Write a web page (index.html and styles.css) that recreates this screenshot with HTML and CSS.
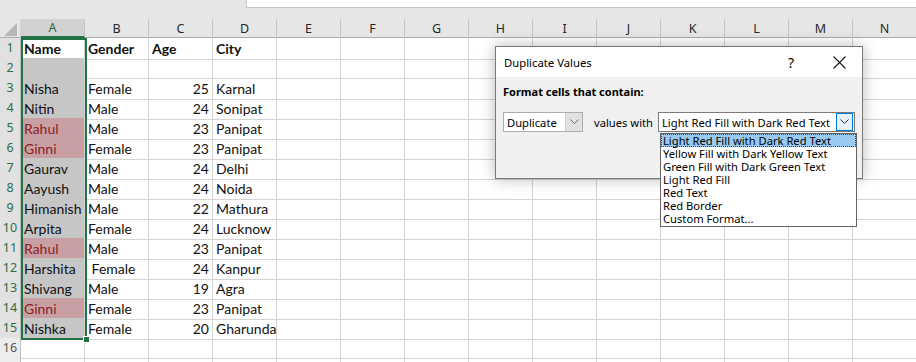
FILE: index.html
```html
<!DOCTYPE html>
<html lang="en">
<head>
    <meta charset="UTF-8">
    <title>Duplicate Values</title>
    <link rel="stylesheet" href="styles.css">
</head>
<body>
    <!-- Formula bar strip -->
    <div class="topbar"><div class="formula-box"></div></div>

    <!-- Sheet -->
    <div class="sheet">
        <div class="row head">
            <div class="corner"><span class="tri"></span></div>
            <div class="col sel">A</div><div class="col">B</div><div class="col">C</div><div class="col">D</div>
            <div class="col">E</div><div class="col">F</div><div class="col">G</div><div class="col">H</div>
            <div class="col">I</div><div class="col">J</div><div class="col">K</div><div class="col">L</div>
            <div class="col">M</div><div class="col">N</div>
        </div>
        <div class="row bold"><div class="num on">1</div><div class="cell a active">Name</div><div class="cell">Gender</div><div class="cell">Age</div><div class="cell">City</div><div class="rest"></div></div>
        <div class="row"><div class="num on">2</div><div class="cell a"></div><div class="cell"></div><div class="cell"></div><div class="cell"></div><div class="rest"></div></div>
        <div class="row"><div class="num on">3</div><div class="cell a">Nisha</div><div class="cell">Female</div><div class="cell n">25</div><div class="cell">Karnal</div><div class="rest"></div></div>
        <div class="row"><div class="num on">4</div><div class="cell a">Nitin</div><div class="cell">Male</div><div class="cell n">24</div><div class="cell">Sonipat</div><div class="rest"></div></div>
        <div class="row"><div class="num on">5</div><div class="cell a dup">Rahul</div><div class="cell">Male</div><div class="cell n">23</div><div class="cell">Panipat</div><div class="rest"></div></div>
        <div class="row"><div class="num on">6</div><div class="cell a dup">Ginni</div><div class="cell">Female</div><div class="cell n">23</div><div class="cell">Panipat</div><div class="rest"></div></div>
        <div class="row"><div class="num on">7</div><div class="cell a">Gaurav</div><div class="cell">Male</div><div class="cell n">24</div><div class="cell">Delhi</div><div class="rest"></div></div>
        <div class="row"><div class="num on">8</div><div class="cell a">Aayush</div><div class="cell">Male</div><div class="cell n">24</div><div class="cell">Noida</div><div class="rest"></div></div>
        <div class="row"><div class="num on">9</div><div class="cell a">Himanish</div><div class="cell">Male</div><div class="cell n">22</div><div class="cell">Mathura</div><div class="rest"></div></div>
        <div class="row"><div class="num on">10</div><div class="cell a">Arpita</div><div class="cell">Female</div><div class="cell n">24</div><div class="cell">Lucknow</div><div class="rest"></div></div>
        <div class="row"><div class="num on">11</div><div class="cell a dup">Rahul</div><div class="cell">Male</div><div class="cell n">23</div><div class="cell">Panipat</div><div class="rest"></div></div>
        <div class="row"><div class="num on">12</div><div class="cell a">Harshita</div><div class="cell">&nbsp;Female</div><div class="cell n">24</div><div class="cell">Kanpur</div><div class="rest"></div></div>
        <div class="row"><div class="num on">13</div><div class="cell a">Shivang</div><div class="cell">Male</div><div class="cell n">19</div><div class="cell">Agra</div><div class="rest"></div></div>
        <div class="row"><div class="num on">14</div><div class="cell a dup">Ginni</div><div class="cell">Female</div><div class="cell n">23</div><div class="cell">Panipat</div><div class="rest"></div></div>
        <div class="row"><div class="num on">15</div><div class="cell a">Nishka</div><div class="cell">Female</div><div class="cell n">20</div><div class="cell">Gharunda</div><div class="rest"></div></div>
        <div class="row"><div class="num">16</div><div class="cell"></div><div class="cell"></div><div class="cell"></div><div class="cell"></div><div class="rest"></div></div>
        <div class="row"><div class="num"></div><div class="cell"></div><div class="cell"></div><div class="cell"></div><div class="cell"></div><div class="rest"></div></div>

        <!-- Selection outline over A1:A15 -->
        <div class="selection"><span class="handle"></span></div>
    </div>

    <!-- Duplicate Values dialog -->
    <div class="dialog">
        <div class="dialog-title">
            <span class="title-text">Duplicate Values</span>
            <span class="help">?</span>
            <svg class="close" width="13" height="13" viewBox="0 0 13 13"><path d="M0.5 0.5 L12.5 12.5 M12.5 0.5 L0.5 12.5" stroke="#1a1a1a" stroke-width="1.1"/></svg>
        </div>
        <div class="dialog-body">
            <div class="label">Format cells that contain:</div>
            <div class="controls">
                <div class="combo small">
                    <span class="combo-text">Duplicate</span>
                    <span class="combo-btn">
                        <svg width="9" height="6" viewBox="0 0 9 6"><path d="M0.5 0.5 L4.5 4.5 L8.5 0.5" fill="none" stroke="#6d6d6d" stroke-width="1"/></svg>
                    </span>
                </div>
                <span class="values-with">values with</span>
                <div class="combo wide">
                    <span class="combo-text">Light Red Fill with Dark Red Text</span>
                    <span class="combo-btn focus">
                        <svg width="9" height="6" viewBox="0 0 9 6"><path d="M0.5 0.5 L4.5 4.5 L8.5 0.5" fill="none" stroke="#333" stroke-width="1"/></svg>
                    </span>
                </div>
            </div>
        </div>
    </div>

    <!-- Open dropdown list -->
    <ul class="droplist">
        <li class="picked">Light Red Fill with Dark Red Text</li>
        <li>Yellow Fill with Dark Yellow Text</li>
        <li>Green Fill with Dark Green Text</li>
        <li>Light Red Fill</li>
        <li>Red Text</li>
        <li>Red Border</li>
        <li>Custom Format...</li>
    </ul>
</body>
</html>
```

FILE: styles.css
```css
/* Page */
body {
    margin: 0;
    background: #ffffff;
    overflow: hidden;
    width: 916px;
    height: 362px;
    position: relative;
    font-family: Lato, "Liberation Sans", sans-serif;
}

/* Formula bar strip */
.topbar {
    height: 19px;
    background: #e6e6e6;
}

.formula-box {
    margin-left: 246px;
    height: 8px;
    background: #ffffff;
    border-left: 1px solid #c6c6c6;
    border-bottom: 1px solid #c6c6c6;
    box-sizing: border-box;
}

/* Sheet grid */
.sheet {
    position: relative;
}

.row {
    display: grid;
    grid-template-columns: 21px 64px 64px 64px 64px 1fr;
    height: 20px;
}

.row.head {
    grid-template-columns: 21px repeat(14, 64px);
    height: 19px;
    background: #e6e6e6;
    border-bottom: 1px solid #ababab;
    box-sizing: border-box;
}

.corner {
    position: relative;
    border-right: 1px solid #d4d4d4;
}

.tri {
    position: absolute;
    right: 3px;
    bottom: 2px;
    width: 0;
    height: 0;
    border-left: 13px solid transparent;
    border-bottom: 13px solid #b7b7b7;
}

.col {
    font-family: "Noto Sans", sans-serif;
    font-size: 12.5px;
    color: #262626;
    text-align: center;
    line-height: 19px;
    border-right: 1px solid #c4c4c4;
}

.col.sel {
    background: #d2d2d2;
    color: #1e6b40;
    border-bottom: 2px solid #217346;
    line-height: 17px;
}

.num {
    font-family: "Noto Sans", sans-serif;
    font-size: 12.5px;
    color: #555;
    background: #ededed;
    text-align: center;
    line-height: 20px;
    border-right: 1px solid #bcbcbc;
    border-bottom: 1px solid #d4d4d4;
    box-sizing: border-box;
}

.num.on {
    background: #e1e1e1;
    color: #2a6f4a;
}

.cell {
    font-size: 14px;
    line-height: 21px;
    color: #111;
    padding: 0 3px;
    white-space: nowrap;
    border-right: 1px solid #d4d4d4;
    border-bottom: 1px solid #d4d4d4;
    box-sizing: border-box;
}

.bold .cell {
    font-weight: bold;
}

.cell.n {
    text-align: right;
}

.cell.a {
    background: #c6c6c6;
}

.cell.a.active {
    background: #ffffff;
}

.cell.dup {
    background: #c8a0a4;
    color: #8c1c1c;
}

.rest {
    border-bottom: 1px solid #d4d4d4;
    background: repeating-linear-gradient(to right, transparent 0 63px, #d4d4d4 63px 64px);
}

/* Selection outline */
.selection {
    position: absolute;
    left: 21px;
    top: 19px;
    width: 66px;
    height: 302px;
    border: 2px solid #217346;
    box-sizing: border-box;
    pointer-events: none;
}

.handle {
    position: absolute;
    right: -5px;
    bottom: -5px;
    width: 5px;
    height: 5px;
    background: #217346;
    border: 1px solid #ffffff;
}

/* Dialog */
.dialog {
    position: absolute;
    left: 495px;
    top: 46px;
    width: 368px;
    height: 133px;
    background: #f0f0f0;
    border: 1px solid #7a7a7a;
    box-sizing: border-box;
    box-shadow: 0 0 14px rgba(0, 0, 0, 0.28);
    font-family: "Noto Sans", sans-serif;
    font-size: 11.2px;
    color: #000;
}

.dialog-title {
    height: 30px;
    background: #ffffff;
    display: flex;
    align-items: center;
    padding-left: 8px;
    font-size: 11.3px;
}

.title-text {
    flex: 1;
}

.help {
    width: 20px;
    font-size: 14px;
    margin-right: 25px;
}

.close {
    margin-right: 16px;
}

.dialog-body {
    padding: 6px 7px;
}

.label {
    font-weight: bold;
    font-size: 11px;
    line-height: 18px;
}

.controls {
    display: flex;
    align-items: center;
    margin-top: 11px;
    white-space: nowrap;
}

.combo {
    height: 20px;
    border: 1px solid #adadad;
    background: #ffffff;
    display: flex;
    align-items: center;
    box-sizing: border-box;
    flex: none;
}

.combo.small {
    width: 80px;
}

.combo.wide {
    width: 197px;
    border-color: #7a7a7a;
    margin-left: auto;
    margin-right: 0;
}

.combo-text {
    flex: 1;
    padding-left: 3px;
    white-space: nowrap;
    overflow: hidden;
}

.combo-btn {
    width: 17px;
    height: 18px;
    background: #e1e1e1;
    border-left: 1px solid #d0d0d0;
    display: flex;
    align-items: center;
    justify-content: center;
    box-sizing: border-box;
    flex: none;
}

.combo-btn.focus {
    background: #e5f1fb;
    border: 1px solid #0078d7;
    margin-right: 1px;
}

.values-with {
    margin-left: 11px;
}

/* Dropdown list */
.droplist {
    position: absolute;
    left: 660px;
    top: 133px;
    width: 197px;
    margin: 0;
    padding: 0 0 1px;
    list-style: none;
    background: #ffffff;
    border: 1px solid #646464;
    box-sizing: border-box;
    font-family: "Noto Sans", sans-serif;
    font-size: 11.2px;
    color: #000;
}

.droplist li {
    height: 13px;
    line-height: 13px;
    padding-left: 2px;
    white-space: nowrap;
}

.droplist li.picked {
    background: #99c9ef;
    outline: 1px dotted #444;
    outline-offset: -1px;
}
```
